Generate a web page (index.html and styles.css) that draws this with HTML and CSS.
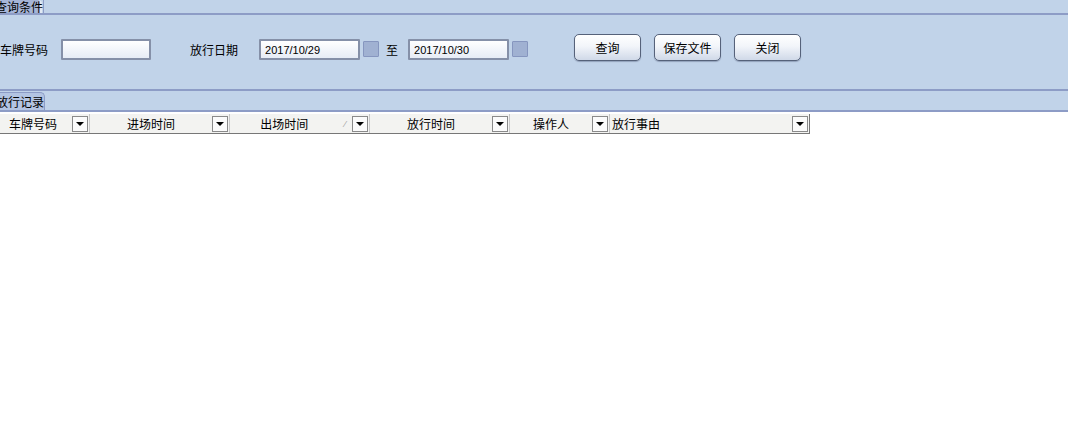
FILE: index.html
```html
<!DOCTYPE html>
<html lang="zh-CN">
<head>
    <meta charset="UTF-8">
    <title>放行记录查询</title>
    <link rel="stylesheet" href="styles.css">
</head>
<body>
    <div class="top-area">
        <div class="tabbar">
            <div class="tab active">查询条件</div>
            <div class="tab-edge"></div>
        </div>

        <div class="query">
            <span class="lbl">车牌号码</span>
            <input class="txt plate" type="text">
            <span class="lbl date-lbl">放行日期</span>
            <input class="txt date" type="text" value="2017/10/29">
            <span class="pick"></span>
            <span class="lbl to">至</span>
            <input class="txt date" type="text" value="2017/10/30">
            <span class="pick"></span>
            <button class="btn first">查询</button>
            <button class="btn">保存文件</button>
            <button class="btn">关闭</button>
        </div>

        <div class="tabbar second">
            <div class="tab active">放行记录</div>
        </div>
    </div>

    <div class="grid">
        <div class="grid-head">
            <div class="col c1"><span class="cap">车牌号码</span><span class="drop"></span></div>
            <div class="col c2"><span class="cap">进场时间</span><span class="drop"></span></div>
            <div class="col c3"><span class="cap">出场时间</span><span class="sort">⁄</span><span class="drop"></span></div>
            <div class="col c4"><span class="cap">放行时间</span><span class="drop"></span></div>
            <div class="col c5"><span class="cap">操作人</span><span class="drop"></span></div>
            <div class="col c6"><span class="cap left">放行事由</span><span class="drop"></span></div>
        </div>
    </div>
</body>
</html>
```

FILE: styles.css
```css
html, body { margin: 0; padding: 0; background: #ffffff; }
body { width: 1068px; height: 423px; overflow: hidden; font-family: "Noto Sans CJK SC", "Liberation Sans", sans-serif; font-size: 12px; color: #000; }

.top-area { background: #c1d3e9; }

/* tabs */
.tabbar { display: flex; height: 13px; border-bottom: 2px solid #8d9cc6; }
.tab { font-size: 12px; white-space: nowrap; flex-shrink: 0; }
.tab.active { box-sizing: border-box; line-height: 13px; height: 13px; background: #a6b5d7; margin-left: -5px; width: 47px; border-right: 2px solid #e2e9f3; border-radius: 0 4px 0 0; }
.tab-edge { width: 1px; border-right: 1px solid #8d9cc6; }

.tabbar.second { height: 19px; border-top: 2px solid #8d9cc6; border-bottom: 2px solid #8d9cc6; align-items: flex-end; }
.tabbar.second .tab.active { line-height: 17px; height: 18px; margin-left: -5px; width: 50px; background: #b3c4e2; border: 1px solid #8d9cc6; border-bottom: none; border-radius: 0 5px 0 0; }

/* query panel */
.query { display: flex; align-items: flex-start; height: 74px; box-sizing: border-box; padding-top: 19px; }
.lbl { white-space: nowrap; line-height: 18px; margin-top: 7px; }
.date-lbl { margin-left: 39px; }
.to { margin-left: 7px; }
.txt { box-sizing: border-box; height: 21px; margin-top: 5px; border: 2px solid #8590a8; border-radius: 1px; background: linear-gradient(#ffffff, #e6ecf6); padding: 0 0 0 4px; font-family: "Liberation Sans", sans-serif; font-size: 11px; color: #000; outline: none; }
.txt.plate { width: 90px; margin-left: 13px; }
.txt.date { width: 101px; margin-left: 21px; }
.to + .txt.date { margin-left: 10px; }
.pick { width: 16px; height: 16px; box-sizing: border-box; margin: 7px 0 0 3px; background: #a0b1d2; border: 1px solid #8696bf; border-radius: 1px; }

.btn { box-sizing: border-box; width: 67px; height: 27px; margin-left: 13px; font-family: "Noto Sans CJK SC", sans-serif; font-size: 12px; color: #000; border: 1px solid #56627a; border-radius: 5px; background: linear-gradient(#ffffff 0%, #f2f5fa 45%, #d0d9e8 100%); box-shadow: 0 1px 1px rgba(60, 70, 100, 0.35); padding: 0; }
.btn.first { margin-left: 46px; }

/* grid */
.grid { background: #ffffff; padding-top: 2px; }
.grid-head { display: flex; width: 809px; height: 19px; border-right: 1px solid #777; border-bottom: 1px solid #777; background: #f3f3f1; }
.col { display: flex; align-items: center; box-sizing: border-box; border-right: 1px solid #c9c9c9; padding-right: 1px; }
.c1 { width: 90px; }
.c2, .c3, .c4 { width: 140px; }
.c5 { width: 100px; }
.c6 { width: 199px; border-right: none; }
.cap { flex: 1; text-align: center; line-height: 18px; white-space: nowrap; }
.c1 .cap, .c3 .cap { padding-right: 6px; }
.cap.left { text-align: left; padding-left: 2px; }
.sort { color: #a0a0a0; font-size: 9px; margin-right: 6px; }
.drop { width: 16px; height: 16px; box-sizing: border-box; border: 1px solid #8a8a8a; background: #fbfbfb; position: relative; }
.drop::after { content: ""; position: absolute; left: 3px; top: 5px; border-left: 4px solid transparent; border-right: 4px solid transparent; border-top: 4px solid #000; }
```
